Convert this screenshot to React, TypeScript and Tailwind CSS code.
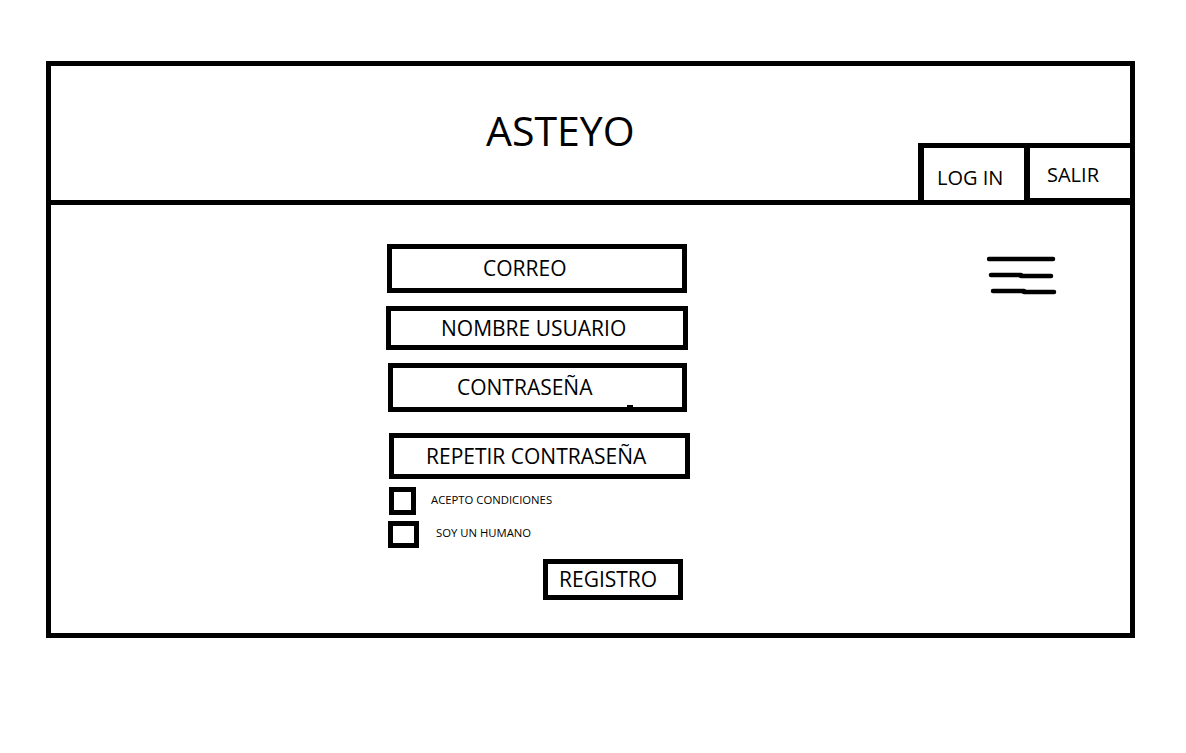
const font = { fontFamily: '"Open Sans", "Noto Sans", sans-serif' };

function Field({ label, className }: { label: string; className: string }) {
  return (
    <div className={`flex items-center border-[5px] border-black text-[21px] leading-none text-black ${className}`}>
      {label}
    </div>
  );
}

function Check({ label, className, labelClass }: { label: string; className: string; labelClass: string }) {
  return (
    <div className="flex items-center">
      <div className={`border-[5px] border-black ${className}`} />
      <span className={`text-[11.3px] leading-none text-black ${labelClass}`}>{label}</span>
    </div>
  );
}

function Hamburger() {
  return (
    <svg width="72" height="40" viewBox="0 0 72 40" className="mt-[51px] ml-[297px]">
      <g stroke="black" strokeWidth="4.5" strokeLinecap="round">
        <line x1="2" y1="3" x2="66" y2="3" />
        <line x1="4" y1="19" x2="34" y2="19" />
        <line x1="34" y1="20" x2="64" y2="20" />
        <line x1="6" y1="35" x2="37" y2="35" />
        <line x1="37" y1="36" x2="67" y2="36" />
      </g>
    </svg>
  );
}

export default function App() {
  return (
    <div className="min-h-[753px] w-full bg-white pt-[61px] pl-[46px]" style={font}>
      <div className="flex h-[577px] w-[1089px] flex-col border-[5px] border-black">
        {/* header */}
        <header className="flex h-[139px] shrink-0 border-b-[5px] border-black">
          <div className="flex-1 pl-[435px] pt-[44px]">
            <h1 className="text-[41px] leading-none text-black">ASTEYO</h1>
          </div>
          <div className="flex items-end">
            <div className="flex h-[57px] w-[112px] items-center border-t-[5px] border-l-[6px] border-r-[6px] border-black pl-[13px] pt-[8px] text-[20px] text-black">
              LOG IN
            </div>
            <div className="flex h-[57px] w-[100px] items-center border-t-[5px] border-b-[2px] border-black pl-[17px] pt-[4px] text-[20px] text-black">
              SALIR
            </div>
          </div>
        </header>

        {/* body */}
        <main className="flex flex-1">
          <div className="ml-[335px] flex flex-col pt-[39px]">
            <Field label="CORREO" className="ml-[1px] h-[49px] w-[300px] pl-[91px]" />
            <Field label="NOMBRE USUARIO" className="mt-[13px] h-[44px] w-[302px] pl-[50px]" />
            <div className="relative">
              <Field label="CONTRASEÑA" className="ml-[2px] mt-[13px] h-[49px] w-[299px] pl-[64px]" />
              <span className="absolute left-[241px] top-[55px] h-[2px] w-[6px] bg-black" />
            </div>
            <Field label="REPETIR CONTRASEÑA" className="ml-[3px] mt-[21px] h-[46px] w-[301px] pl-[32px]" />
            <div className="mt-[8px]">
              <Check label="ACEPTO CONDICIONES" className="ml-[3px] h-[28px] w-[27px]" labelClass="ml-[15px] -mt-[3px]" />
            </div>
            <div className="mt-[6px]">
              <Check label="SOY UN HUMANO" className="ml-[2px] h-[27px] w-[31px]" labelClass="ml-[17px] -mt-[3px]" />
            </div>
            <div className="ml-[157px] mt-[11px] flex h-[41px] w-[140px] items-center border-[5px] border-black pl-[11px] text-[21px] leading-none text-black">
              REGISTRO
            </div>
          </div>
          <Hamburger />
        </main>
      </div>
    </div>
  );
}
